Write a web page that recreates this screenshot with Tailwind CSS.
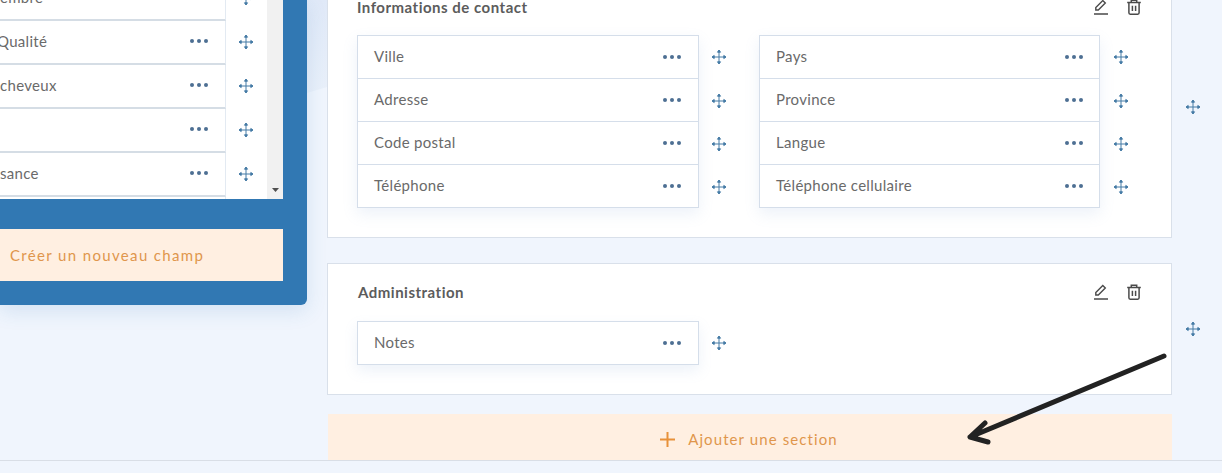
<!DOCTYPE html>
<html lang="fr">
<head>
  <meta charset="UTF-8">
  <title>Champs du formulaire</title>
  <script src="https://cdn.jsdelivr.net/npm/@tailwindcss/browser@4"></script>
</head>
<body class="relative h-[473px] w-[1222px] overflow-hidden bg-[#f0f5fd] font-['Lato','Noto_Sans',sans-serif] text-[15px] tracking-[0.3px] text-[#6a6a6a]">
  <!-- shared icons -->
  <svg class="hidden">
    <symbol id="move" viewBox="0 0 16 16"><path fill="currentColor" stroke="currentColor" stroke-width="1" d="M8 1.5v13M1.5 8h13M6.5 3.2 8 1l1.5 2.2zM6.5 12.8 8 15l1.5-2.2zM3.2 6.5 1 8l2.2 1.5zM12.8 6.5 15 8l-2.2 1.5z"/></symbol>
    <symbol id="pencil" viewBox="0 0 16 16"><path fill="none" stroke="currentColor" stroke-width="1.4" d="M1 15h14M2.8 11V8.6L9.8 1.6l2.5 2.5L5.3 11z"/></symbol>
    <symbol id="trash" viewBox="0 0 16 16"><path fill="none" stroke="currentColor" stroke-width="1.5" d="M1.2 3.5h13.6M5.3 3.5V1.3h5.4v2.2M2.9 3.5v10.3c0 .8.5 1.4 1.3 1.4h7.6c.8 0 1.3-.6 1.3-1.4V3.5M6.4 6.8v5.2M9.6 6.8v5.2"/></symbol>
    <symbol id="dots" viewBox="0 0 18 4"><g fill="currentColor"><circle cx="2" cy="2" r="2"/><circle cx="9" cy="2" r="2"/><circle cx="16" cy="2" r="2"/></g></symbol>
  </svg>

  <!-- tinted backdrop behind the top of the left panel -->
  <div class="absolute left-0 top-0 h-[93px] w-[327px] bg-gradient-to-b from-[#e0e9f8] to-[#e9f0fa] [clip-path:polygon(0_0,100%_0,100%_87px,307px_93px,0_93px)]"></div>

  <div class="relative flex h-[460px] items-start gap-[20px]">
    <!-- Left panel -->
    <aside class="flex h-[305px] w-[307px] shrink-0 flex-col gap-[30px] rounded-br-md bg-[#3178b3] pr-[24px] shadow-[0_6px_20px_rgba(49,120,179,0.15)]">
      <div class="flex h-[199px] overflow-hidden bg-white">
        <div class="-mt-[23px] w-[267px] shrink-0">
          <div class="flex h-[44px] items-center"><div class="flex h-full w-[226px] items-center justify-between border-b-2 border-r border-b-[#d5dde5] border-r-[#e3eaf2] pb-[2px] pr-[17px]"><span>embre</span><svg class="h-[4px] w-[18px] text-[#4d6f93]"><use href="#dots"/></svg></div><svg class="-mt-[2px] ml-[12px] size-[16px] text-[#447aa5]"><use href="#move"/></svg></div>
          <div class="flex h-[44px] items-center"><div class="flex h-full w-[226px] items-center justify-between border-b-2 border-r border-b-[#d5dde5] border-r-[#e3eaf2] pb-[2px] pr-[17px]"><span class="-ml-[3px]">Qualité</span><svg class="h-[4px] w-[18px] text-[#4d6f93]"><use href="#dots"/></svg></div><svg class="-mt-[2px] ml-[12px] size-[16px] text-[#447aa5]"><use href="#move"/></svg></div>
          <div class="flex h-[44px] items-center"><div class="flex h-full w-[226px] items-center justify-between border-b-2 border-r border-b-[#d5dde5] border-r-[#e3eaf2] pb-[2px] pr-[17px]"><span>cheveux</span><svg class="h-[4px] w-[18px] text-[#4d6f93]"><use href="#dots"/></svg></div><svg class="-mt-[2px] ml-[12px] size-[16px] text-[#447aa5]"><use href="#move"/></svg></div>
          <div class="flex h-[44px] items-center"><div class="flex h-full w-[226px] items-center justify-end border-b-2 border-r border-b-[#d5dde5] border-r-[#e3eaf2] pb-[2px] pr-[17px]"><svg class="h-[4px] w-[18px] text-[#4d6f93]"><use href="#dots"/></svg></div><svg class="-mt-[2px] ml-[12px] size-[16px] text-[#447aa5]"><use href="#move"/></svg></div>
          <div class="flex h-[44px] items-center"><div class="flex h-full w-[226px] items-center justify-between border-b-2 border-r border-b-[#d5dde5] border-r-[#e3eaf2] pb-[2px] pr-[17px]"><span>sance</span><svg class="h-[4px] w-[18px] text-[#4d6f93]"><use href="#dots"/></svg></div><svg class="-mt-[2px] ml-[12px] size-[16px] text-[#447aa5]"><use href="#move"/></svg></div>
          <div class="h-[44px] w-[226px] border-r border-r-[#e3eaf2]"></div>
        </div>
        <!-- scrollbar -->
        <div class="flex w-[16px] flex-col items-center justify-end bg-[#f1f1f1] pb-[7px]">
          <svg class="h-[4px] w-[7px] text-[#505050]" viewBox="0 0 7 4" fill="currentColor"><path d="M0 0h7L3.5 4z"/></svg>
        </div>
      </div>
      <button class="flex h-[52px] items-center bg-[#ffefe1] pl-[10px] tracking-[1.35px] text-[#e0964c]">Créer un nouveau champ</button>
    </aside>

    <!-- Right column -->
    <main class="-mt-[23px] w-[845px]">
      <section class="relative border border-[#d9e0ea] bg-white px-[29px] pb-[29px] pt-[15px]">
        <div class="mb-[14px] flex h-[28px] items-center justify-between">
          <h2 class="font-bold tracking-[0.5px] text-[#5c5c5c]">Informations de contact</h2>
          <div class="flex items-center gap-[17px] text-[#4a4a4a]">
            <svg class="size-[16px]"><use href="#pencil"/></svg>
            <svg class="size-[16px]"><use href="#trash"/></svg>
          </div>
        </div>
        <div class="flex gap-[60px]">
          <div class="flex w-[342px] shrink-0">
            <div class="w-[342px] shrink-0 border border-[#d5deea] bg-white shadow-[0_6px_14px_rgba(130,165,215,0.14)]">
              <div class="flex h-[43px] items-center justify-between border-b border-[#d5deea] pl-[16px] pr-[17px]"><span class="-mt-[2px]">Ville</span><svg class="h-[4px] w-[18px] text-[#4d6f93]"><use href="#dots"/></svg></div>
              <div class="flex h-[43px] items-center justify-between border-b border-[#d5deea] pl-[16px] pr-[17px]"><span class="-mt-[2px]">Adresse</span><svg class="h-[4px] w-[18px] text-[#4d6f93]"><use href="#dots"/></svg></div>
              <div class="flex h-[43px] items-center justify-between border-b border-[#d5deea] pl-[16px] pr-[17px]"><span class="-mt-[2px]">Code postal</span><svg class="h-[4px] w-[18px] text-[#4d6f93]"><use href="#dots"/></svg></div>
              <div class="flex h-[42px] items-center justify-between pl-[16px] pr-[17px]"><span class="-mt-[2px]">Téléphone</span><svg class="h-[4px] w-[18px] text-[#4d6f93]"><use href="#dots"/></svg></div>
            </div>
            <div class="ml-[12px] flex w-[16px] shrink-0 flex-col">
              <div class="mb-[1px] flex h-[43px] items-center"><svg class="size-[16px] text-[#447aa5]"><use href="#move"/></svg></div>
              <div class="flex h-[43px] items-center"><svg class="size-[16px] text-[#447aa5]"><use href="#move"/></svg></div>
              <div class="flex h-[43px] items-center"><svg class="size-[16px] text-[#447aa5]"><use href="#move"/></svg></div>
              <div class="flex h-[43px] items-center"><svg class="size-[16px] text-[#447aa5]"><use href="#move"/></svg></div>
            </div>
          </div>
          <div class="flex w-[341px] shrink-0">
            <div class="w-[341px] shrink-0 border border-[#d5deea] bg-white shadow-[0_6px_14px_rgba(130,165,215,0.14)]">
              <div class="flex h-[43px] items-center justify-between border-b border-[#d5deea] px-[16px]"><span class="-mt-[2px]">Pays</span><svg class="h-[4px] w-[18px] text-[#4d6f93]"><use href="#dots"/></svg></div>
              <div class="flex h-[43px] items-center justify-between border-b border-[#d5deea] px-[16px]"><span class="-mt-[2px]">Province</span><svg class="h-[4px] w-[18px] text-[#4d6f93]"><use href="#dots"/></svg></div>
              <div class="flex h-[43px] items-center justify-between border-b border-[#d5deea] px-[16px]"><span class="-mt-[2px]">Langue</span><svg class="h-[4px] w-[18px] text-[#4d6f93]"><use href="#dots"/></svg></div>
              <div class="flex h-[42px] items-center justify-between px-[16px]"><span class="-mt-[2px]">Téléphone cellulaire</span><svg class="h-[4px] w-[18px] text-[#4d6f93]"><use href="#dots"/></svg></div>
            </div>
            <div class="ml-[13px] flex w-[16px] shrink-0 flex-col">
              <div class="mb-[1px] flex h-[43px] items-center"><svg class="size-[16px] text-[#447aa5]"><use href="#move"/></svg></div>
              <div class="flex h-[43px] items-center"><svg class="size-[16px] text-[#447aa5]"><use href="#move"/></svg></div>
              <div class="flex h-[43px] items-center"><svg class="size-[16px] text-[#447aa5]"><use href="#move"/></svg></div>
              <div class="flex h-[43px] items-center"><svg class="size-[16px] text-[#447aa5]"><use href="#move"/></svg></div>
            </div>
          </div>
        </div>
        <svg class="absolute left-[857px] top-[121px] size-[16px] text-[#447aa5]"><use href="#move"/></svg>
      </section>

      <section class="relative mt-[25px] border border-[#d9e0ea] bg-white px-[30px] pb-[29px] pt-[14px]">
        <div class="mb-[15px] flex h-[28px] items-center justify-between">
          <h2 class="font-bold tracking-[0.5px] text-[#5c5c5c]">Administration</h2>
          <div class="-mr-[1px] flex items-center gap-[17px] text-[#4a4a4a]">
            <svg class="size-[16px]"><use href="#pencil"/></svg>
            <svg class="size-[16px]"><use href="#trash"/></svg>
          </div>
        </div>
        <div class="-ml-px flex items-center">
          <div class="flex h-[44px] w-[342px] items-center justify-between border border-[#d5deea] bg-white pl-[16px] pr-[17px] shadow-[0_6px_14px_rgba(130,165,215,0.14)]"><span class="-mt-[2px]">Notes</span><svg class="h-[4px] w-[18px] text-[#4d6f93]"><use href="#dots"/></svg></div>
          <svg class="ml-[12px] size-[16px] text-[#447aa5]"><use href="#move"/></svg>
        </div>
        <svg class="absolute left-[857px] top-[57px] size-[16px] text-[#447aa5]"><use href="#move"/></svg>
      </section>

      <button class="ml-px mt-[19px] flex h-[46px] w-[844px] items-center justify-center gap-[13px] bg-[#ffefe1] pr-[2px] pt-[5px] tracking-[1.1px] text-[#e0964c]">
        <svg class="size-[15px] text-[#e8913a]" viewBox="0 0 15 15" fill="none" stroke="currentColor" stroke-width="2"><path d="M7.5 0v15M0 7.5h15"/></svg>
        Ajouter une section
      </button>
    </main>
  </div>

  <!-- footer bar -->
  <div class="h-[13px] border-t border-[#d9dee6] bg-[#f0f5fd]"></div>

  <!-- hand-drawn annotation arrow -->
  <svg class="pointer-events-none absolute left-0 top-0" width="1222" height="473" fill="none" stroke="#222" stroke-width="5" stroke-linecap="round" stroke-linejoin="round">
    <path d="M1164 356 L970 437 M985 423 L970 437 L988 442"/>
  </svg>
</body>
</html>
